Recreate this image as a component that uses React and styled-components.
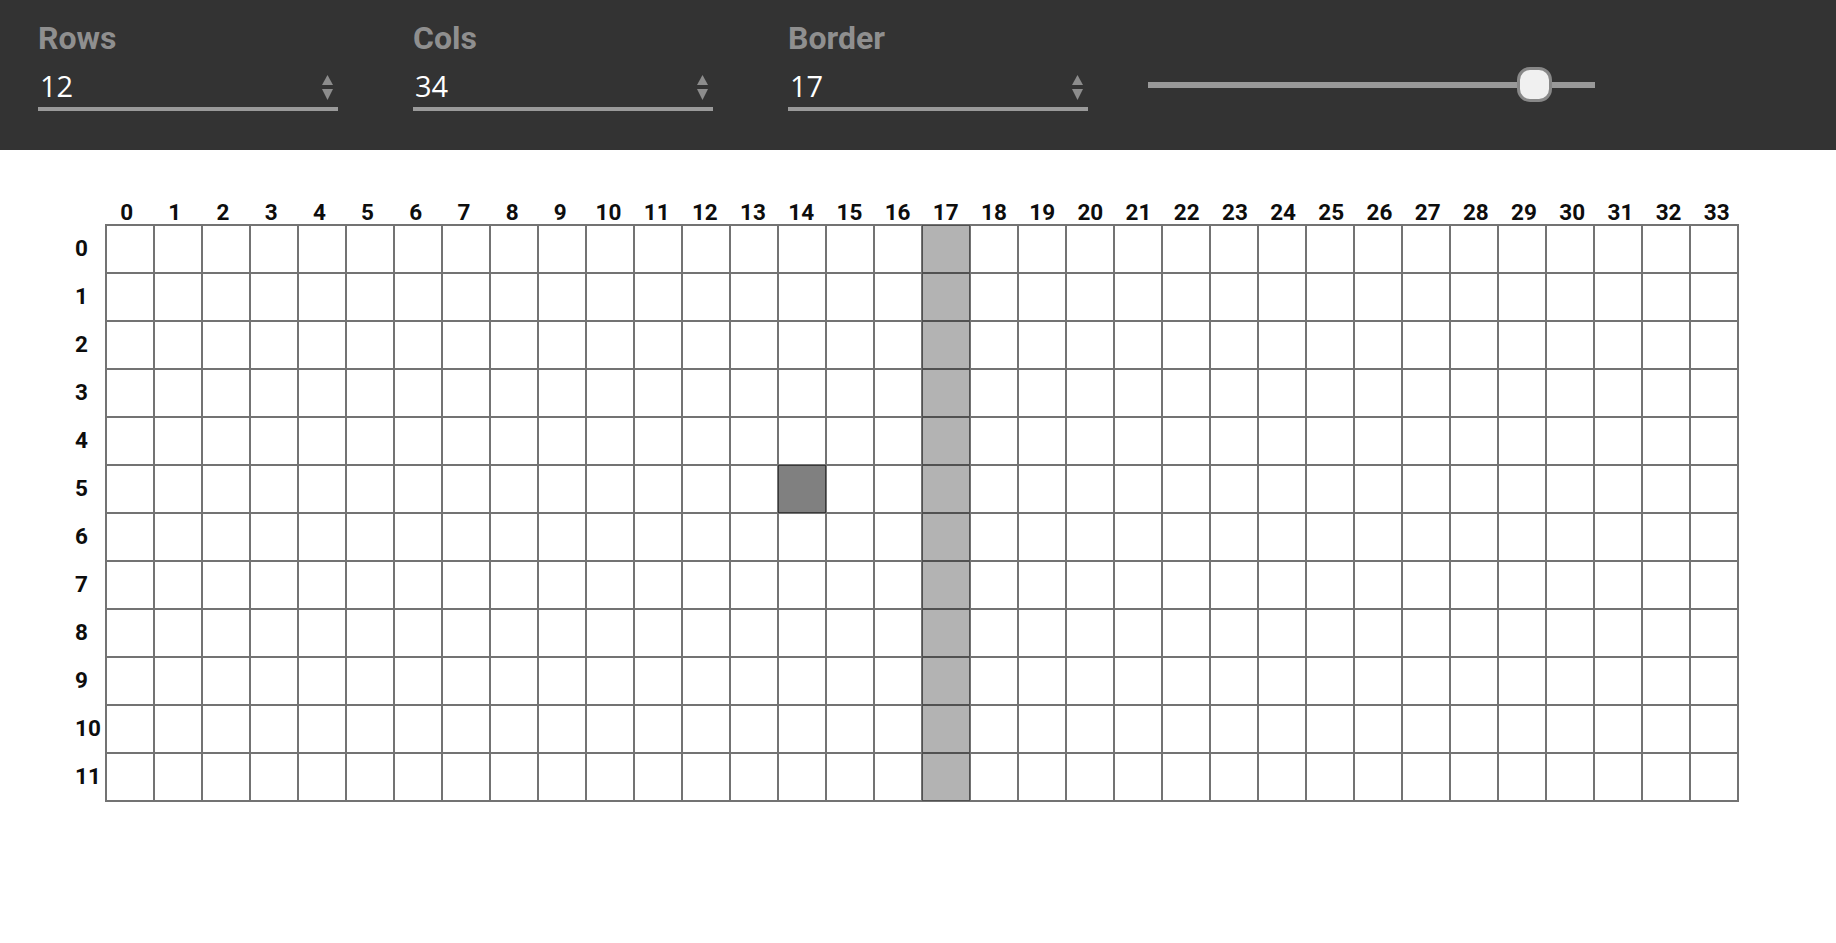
import React from "react";
import styled, { createGlobalStyle } from "styled-components";

const Global = createGlobalStyle`
  html, body { margin: 0; padding: 0; background: #ffffff; }
  body { font-family: Roboto, "Liberation Sans", sans-serif; }
`;

const Header = styled.header`
  height: 150px;
  box-sizing: border-box;
  background: #333333;
  display: flex;
  align-items: flex-start;
  padding: 22px 0 0 38px;
  gap: 75px;
`;

const Field = styled.div`
  width: 300px;
  display: flex;
  flex-direction: column;
`;

const Label = styled.label`
  font-family: Roboto, "Liberation Sans", sans-serif;
  font-weight: 700;
  font-size: 32px;
  line-height: 32px;
  color: #8f8f8f;
`;

const InputRow = styled.div`
  margin-top: 15px;
  display: flex;
  align-items: center;
  justify-content: space-between;
  border-bottom: 4px solid #9a9a9a;
  padding: 0 5px 4px 2px;
  height: 34px;
  box-sizing: content-box;
`;

const Value = styled.input`
  background: transparent;
  border: none;
  outline: none;
  color: #ffffff;
  font-family: "Open Sans", "Liberation Sans", sans-serif;
  font-size: 29px;
  line-height: 34px;
  height: 34px;
  padding: 0;
  width: 200px;
`;

const Spinner = styled.svg`
  width: 11px;
  height: 25px;
  flex: none;
  margin-top: 2px;
`;

const SliderBox = styled.div`
  margin-left: -15px;
  margin-top: 45px;
  width: 447px;
  height: 35px;
  display: flex;
  align-items: center;
  position: relative;
`;

const Track = styled.div`
  width: 100%;
  height: 6px;
  background: #999999;
`;

const Thumb = styled.div`
  position: absolute;
  top: 0;
  width: 35px;
  height: 35px;
  box-sizing: border-box;
  border: 3px solid #888888;
  border-radius: 13px;
  background: #f0f0f0;
`;

const Main = styled.main`
  padding: 52px 0 0 75px;
`;

const Layout = styled.div`
  display: grid;
  grid-template-columns: 30px auto;
  grid-template-rows: 22px auto;
`;

const ColLabels = styled.div`
  display: grid;
  grid-template-columns: repeat(${(p) => p.$n}, 48.2px);
  margin: -2px 0 0 -2.5px;
`;

const RowLabels = styled.div`
  display: grid;
  grid-template-rows: repeat(${(p) => p.$n}, 48px);
  padding-top: 1px;
`;

const AxisLabel = styled.div`
  font-family: Roboto, "Liberation Sans", sans-serif;
  font-weight: 700;
  font-size: 22.5px;
  line-height: 22px;
  color: #0d0d0d;
  display: flex;
  align-items: center;
  justify-content: ${(p) => (p.$row ? "flex-start" : "center")};
  margin-top: ${(p) => (p.$row ? "-3px" : "0")};
`;

const Board = styled.div`
  display: grid;
  grid-template-columns: repeat(${(p) => p.$cols}, 48px);
  grid-template-rows: repeat(${(p) => p.$rows}, 48px);
  border: 1px solid rgba(0, 0, 0, 0.55);
  width: max-content;
`;

const Cell = styled.div`
  box-sizing: border-box;
  border: 1px solid rgba(0, 0, 0, 0.55);
  background: ${(p) =>
    p.$state === "active" ? "#808080" : p.$state === "border" ? "#b3b3b3" : "#ffffff"};
`;

function NumberField({ label, value }) {
  return (
    <Field>
      <Label>{label}</Label>
      <InputRow>
        <Value type="text" value={value} readOnly />
        <Spinner viewBox="0 0 11 25">
          <path d="M5.5 0 L11 10 L0 10 Z" fill="#8c8c8c" />
          <path d="M0 14 L11 14 L5.5 25 Z" fill="#8c8c8c" />
        </Spinner>
      </InputRow>
    </Field>
  );
}

export default function App() {
  const rows = 12;
  const cols = 34;
  const border = 17;
  const sliderMax = 19;
  const active = { r: 5, c: 14 };
  const thumbLeft = (border / sliderMax) * (447 - 35);

  const cells = [];
  for (let r = 0; r < rows; r++) {
    for (let c = 0; c < cols; c++) {
      const state =
        r === active.r && c === active.c ? "active" : c === border ? "border" : "none";
      cells.push(<Cell key={`${r}-${c}`} $state={state} />);
    }
  }

  return (
    <>
      <Global />
      <Header>
        <NumberField label="Rows" value={rows} />
        <NumberField label="Cols" value={cols} />
        <NumberField label="Border" value={border} />
        <SliderBox>
          <Track />
          <Thumb style={{ left: `${thumbLeft}px` }} />
        </SliderBox>
      </Header>
      <Main>
        <Layout>
          <div />
          <ColLabels $n={cols}>
            {Array.from({ length: cols }, (_, i) => (
              <AxisLabel key={i}>{i}</AxisLabel>
            ))}
          </ColLabels>
          <RowLabels $n={rows}>
            {Array.from({ length: rows }, (_, i) => (
              <AxisLabel key={i} $row>
                {i}
              </AxisLabel>
            ))}
          </RowLabels>
          <Board $cols={cols} $rows={rows}>
            {cells}
          </Board>
        </Layout>
      </Main>
    </>
  );
}
